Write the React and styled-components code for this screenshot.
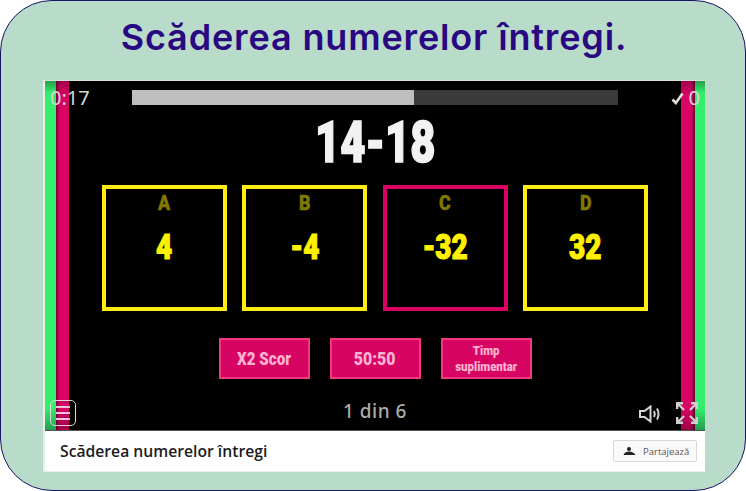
import React from 'react'
import styled, {createGlobalStyle} from 'styled-components'

const GlobalStyle = createGlobalStyle`
    html, body {
        margin: 0;
        padding: 0;
        background: #fff;
    }
`

const heavy = `"Roboto", "Liberation Sans", sans-serif`

const Card = styled.div`
    box-sizing: border-box;
    width: 746px;
    height: 491px;
    background: #b8dcc9;
    border: 1px solid #1a1464;
    border-radius: 52px;
    padding: 12px 0 0 42px;
`

const Title = styled.h1`
    width: 662px;
    height: 48px;
    margin: 0 0 19px 0;
    text-align: center;
    white-space: nowrap;
    font-family: "Inter", "Noto Sans", sans-serif;
    font-size: 36px;
    line-height: 48px;
    font-weight: 600;
    letter-spacing: 0.85px;
    color: #290882;
`

const Frame = styled.div`
    width: 662px;
    height: 392px;
    background: #fff;
    box-sizing: border-box;
    border-top: 1px solid #d8e4dc;
    border-left: 2px solid #e8efe9;
    border-bottom: 1px solid #e8efe9;
    display: flex;
    flex-direction: column;
`

const Game = styled.div`
    height: 350px;
    background: #000;
    position: relative;
    display: flex;
    flex-direction: column;
    align-items: center;
    overflow: hidden;
    border-bottom: 1px solid #555;
    box-sizing: border-box;
`

const Strip = styled.div`
    position: absolute;
    top: 0;
    bottom: 0;
    ${p => p.$side}: ${p => p.$offset}px;
    width: ${p => p.$width}px;
    background: ${p => p.$background};
    box-shadow: ${p => p.$shadow || 'none'};
`

const green = 'linear-gradient(#249e4e 0, #35ee6c 12px, #35ee6c calc(100% - 22px), #249e4e 100%)'
const pink = 'linear-gradient(#a00149 0, #d80463 14px, #d80463 calc(100% - 22px), #a00149 100%)'

const TopBar = styled.div`
    position: relative;
    box-sizing: border-box;
    width: 100%;
    height: 30px;
    display: flex;
    align-items: flex-start;
    padding: 0 5px 0 5px;
`

const Time = styled.div`
    width: 82px;
    font-family: "Noto Sans", sans-serif;
    font-size: 20px;
    line-height: 34px;
    color: #d6d6d6;
`

const Progress = styled.div`
    margin-top: 9px;
    width: 486px;
    height: 15px;
    background: #3a3a3a;
`

const ProgressFill = styled.div`
    height: 100%;
    background: #bfbfbf;
`

const Score = styled.div`
    margin-left: auto;
    display: flex;
    align-items: center;
    gap: 5px;
    font-family: "Noto Sans", sans-serif;
    font-size: 20px;
    line-height: 34px;
    color: #d6d6d6;
`

const Squeeze = styled.span`
    display: inline-block;
    white-space: nowrap;
    transform: scaleX(${p => p.$x});
`

const Question = styled.div`
    position: relative;
    font-family: ${heavy};
    font-weight: 900;
    font-size: 58px;
    line-height: 62px;
    color: #f2f2f2;
    -webkit-text-stroke: 1.6px #f2f2f2;
`

const Answers = styled.div`
    position: relative;
    display: flex;
    gap: 15.33px;
    margin-top: 12px;
`

const Answer = styled.div`
    box-sizing: border-box;
    width: 125px;
    height: 126px;
    border: 4px solid ${p => (p.$wrong ? '#d80463' : '#ffed0f')};
    display: flex;
    flex-direction: column;
    align-items: center;
`

const Letter = styled.div`
    margin-top: 2px;
    font-family: ${heavy};
    font-weight: 900;
    font-size: 21px;
    line-height: 24px;
    color: #807800;
    -webkit-text-stroke: 0.4px #807800;
`

const Value = styled.div`
    margin-top: 13px;
    font-family: ${heavy};
    font-weight: 900;
    font-size: 35px;
    line-height: 40px;
    color: #fff000;
    -webkit-text-stroke: 1.1px #fff000;
`

const Powers = styled.div`
    position: relative;
    display: flex;
    gap: 20px;
    margin-top: 27px;
`

const Power = styled.div`
    box-sizing: border-box;
    width: 91px;
    height: 41px;
    background: #d80463;
    border: 2px solid #f0397f;
    display: flex;
    align-items: center;
    justify-content: center;
    text-align: center;
    font-family: ${heavy};
    font-weight: 900;
    font-size: ${p => (p.$small ? 13 : 18)}px;
    line-height: ${p => (p.$small ? 16 : 18)}px;
    color: #ffb3d1;
`

const BottomBar = styled.div`
    position: relative;
    box-sizing: border-box;
    width: 100%;
    height: 32px;
    margin-top: 19px;
    padding: 0 5px;
    display: grid;
    grid-template-columns: 1fr auto 1fr;
    align-items: start;
`

const Counter = styled.div`
    font-family: "Noto Sans", sans-serif;
    font-weight: 500;
    font-size: 19px;
    line-height: 26px;
    letter-spacing: 0.5px;
    color: #acacac;
`

const MenuButton = styled.div`
    box-sizing: border-box;
    margin-top: 2px;
    width: 26px;
    height: 26px;
    border: 1px solid #d8d8d8;
    border-radius: 5px;
    display: flex;
    flex-direction: column;
    justify-content: center;
    align-items: center;
    gap: 4px;
`

const MenuBar = styled.span`
    width: 14px;
    height: 2px;
    background: #f3c4d8;
`

const Controls = styled.div`
    display: flex;
    justify-content: flex-end;
    gap: 15px;
    padding-right: 2px;
`

const SoundIcon = styled.svg`
    margin-top: 7px;
`

const ExpandIcon = styled.svg`
    margin-top: 4px;
`

const Footer = styled.div`
    flex: 1;
    display: flex;
    align-items: center;
    justify-content: space-between;
    padding: 0 8px 0 15px;
`

const FooterTitle = styled.div`
    font-family: "Open Sans", "Noto Sans", sans-serif;
    font-weight: 600;
    font-size: 15.7px;
    color: #1b1b1b;
`

const Share = styled.div`
    box-sizing: border-box;
    width: 84px;
    height: 22px;
    background: #fafafa;
    border: 1px solid #d8d8d8;
    border-radius: 2px;
    display: flex;
    align-items: center;
    gap: 7px;
    padding-left: 9px;
    font-family: "Open Sans", "Noto Sans", sans-serif;
    font-size: 9.5px;
    color: #555;
`

const answers = [
    {letter: 'A', value: '4'},
    {letter: 'B', value: '-4'},
    {letter: 'C', value: '-32', wrong: true},
    {letter: 'D', value: '32'},
]

const App = () => {
    return (
        <>
            <GlobalStyle/>
            <Card>
                <Title>Scăderea numerelor întregi.</Title>
                <Frame>
                    <Game>
                        <Strip $side="left" $offset={0} $width={11} $background={green}/>
                        <Strip $side="left" $offset={11} $width={13} $background={pink} $shadow="inset 3px 0 2px -1px rgba(0,0,0,.4)"/>
                        <Strip $side="right" $offset={0} $width={10} $background={green}/>
                        <Strip $side="right" $offset={10} $width={14} $background={pink} $shadow="inset -3px 0 2px -1px rgba(0,0,0,.5)"/>
                        <TopBar>
                            <Time>0:17</Time>
                            <Progress>
                                <ProgressFill style={{width: `${(282 / 486) * 100}%`}}/>
                            </Progress>
                            <Score>
                                <svg width="13" height="13" viewBox="0 0 13 13">
                                    <path d="M1.5 7.5 L4.8 11 L11.5 1.5" fill="none" stroke="#e0e0e0" strokeWidth="2.6"/>
                                </svg>
                                0
                            </Score>
                        </TopBar>
                        <Question><Squeeze $x={0.75}>14-18</Squeeze></Question>
                        <Answers>
                            {answers.map(a => (
                                <Answer key={a.letter} $wrong={a.wrong}>
                                    <Letter><Squeeze $x={0.85}>{a.letter}</Squeeze></Letter>
                                    <Value><Squeeze $x={0.8}>{a.value}</Squeeze></Value>
                                </Answer>
                            ))}
                        </Answers>
                        <Powers>
                            <Power><Squeeze $x={0.84}>X2 Scor</Squeeze></Power>
                            <Power><Squeeze $x={0.88}>50:50</Squeeze></Power>
                            <Power $small><Squeeze $x={0.88}>Timp<br/>suplimentar</Squeeze></Power>
                        </Powers>
                        <BottomBar>
                            <MenuButton>
                                <MenuBar/>
                                <MenuBar/>
                                <MenuBar/>
                            </MenuButton>
                            <Counter>1 din 6</Counter>
                            <Controls>
                                <SoundIcon width="22" height="18" viewBox="0 0 22 18" fill="none" stroke="#d4d4d4" strokeWidth="2">
                                    <path d="M1 6 H5.5 L11.5 1.5 V16.5 L5.5 12 H1 Z"/>
                                    <path d="M15 6 Q16.6 9 15 12"/>
                                    <path d="M18 3.5 Q21 9 18 14.5"/>
                                </SoundIcon>
                                <ExpandIcon width="22" height="22" viewBox="0 0 22 22" fill="none" stroke="#cfcfcf" strokeWidth="2.4">
                                    <path d="M1.2 7 V1.2 H7 M1.5 1.5 L8 8"/>
                                    <path d="M15 1.2 H20.8 V7 M20.5 1.5 L14 8"/>
                                    <path d="M1.2 15 V20.8 H7 M1.5 20.5 L8 14"/>
                                    <path d="M15 20.8 H20.8 V15 M20.5 20.5 L14 14"/>
                                </ExpandIcon>
                            </Controls>
                        </BottomBar>
                    </Game>
                    <Footer>
                        <FooterTitle>Scăderea numerelor întregi</FooterTitle>
                        <Share>
                            <svg width="13" height="8" viewBox="0 0 13 8" fill="#222">
                                <circle cx="6" cy="2" r="2"/>
                                <path d="M0.5 8 Q1.5 4.5 6 4.5 Q10.5 4.5 12.5 8 Z"/>
                            </svg>
                            Partajează
                        </Share>
                    </Footer>
                </Frame>
            </Card>
        </>
    )
}

export default App
